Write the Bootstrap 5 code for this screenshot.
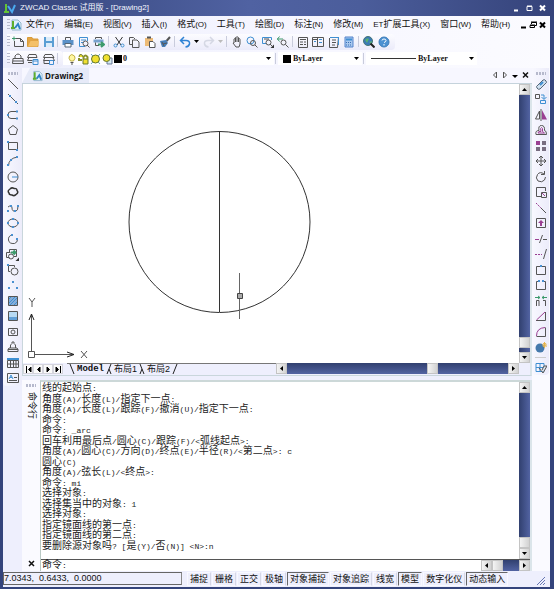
<!DOCTYPE html>
<html lang="zh-CN">
<head>
<meta charset="utf-8">
<meta name="viewport" content="width=device-width, initial-scale=1">
<title>ZWCAD Classic 试用版 - [Drawing2]</title>
<link href="https://cdn.jsdelivr.net/npm/bootstrap@5.3.0/dist/css/bootstrap.min.css" rel="stylesheet">
<style>
body{font-family:"Liberation Sans","Noto Sans CJK SC",sans-serif;font-size:9px;line-height:12px;color:#111;background:#34447c}
button,input,select{font:inherit;color:inherit;border:0;border-radius:0;background:none;padding:0;margin:0;outline-offset:-1px}
a{color:inherit;text-decoration:none}
svg{display:block;flex:none;fill:none;stroke:#555;stroke-width:1}
.bl{stroke:#3f8fd2}.pu{stroke:#9a3f92}.gn{stroke:#3c9a6c}
.fb{fill:#4a90d0;stroke:none}.fd{fill:#333;stroke:none}.fp{fill:#9a3f92;stroke:none}.fy{fill:#f0e030;stroke:#66762c}
.shell{padding:0 4px 2px 3px}
.titlebar{height:16px;background:linear-gradient(90deg,#34447a,#5062a2 45%,#4b5d9b 65%,#35437a);color:#f4f6ff;font-size:8px;margin:0 -4px 0 -3px;padding:0 7px 0 4px}
.titlebar svg{stroke:#fff}
.work{background:#eeeffd}
.bars{background:linear-gradient(90deg,#eceefc,#f6f6ff 50%,#fbfbff);padding-bottom:1px}
.menu-row{height:17px;padding:0 3px 0 4px;gap:10px}
.menu-row small{font-family:"Liberation Sans Narrow","Liberation Sans",sans-serif;font-size:8px}
.grip{width:3px;height:11px;flex:none;background:repeating-linear-gradient(#b6b9cc 0 1px,transparent 1px 3px)}
.tool-row{height:17px;padding-left:4px}
.strip{height:16px;background:linear-gradient(#fcfcff,#ebebfa);border-radius:0 4px 4px 0;padding-right:3px}
.strip button{width:15px;height:15px}
.strip button:nth-of-type(even){width:16px}
.strip button.drop{width:9px}
.tool-row button,.side button{display:flex;align-items:center;justify-content:center}
.divide{width:1px;height:11px;background:#c9ccdc;margin:0 2px 0 1px}
.combo{height:13px;background:#fff;padding:0 3px;gap:1px}
.combo select{appearance:none;min-width:0;font-family:"Liberation Serif",serif;font-size:8px;font-weight:700;line-height:11px}
.combo-layer{flex:0 1 211px;padding-left:4px}
.combo-colour{flex:0 1 84px;padding-left:5px;gap:2px}
.combo-line{flex:0 1 111px;padding-left:5px;gap:2px}
.swatch{width:8px;height:8px;background:#000;flex:none}
.sample{width:45px;height:1px;background:#333;flex:none}
.side{width:19px;background:linear-gradient(90deg,#f8f8ff,#ececfa);padding-top:4px;align-self:flex-start;border-radius:0 0 4px 4px}
.side button{width:18px;height:15px}
.side button:nth-of-type(even){height:16px}
.side-grip{width:10px;height:3px;background:repeating-linear-gradient(90deg,#b6b9cc 0 2px,transparent 2px 3px);margin-bottom:1px}
.side .rule{width:11px;height:1px;background:#ccc;margin:2px 0}
.right-dock{background:#fafaff;width:18px}
.right-dock .side{width:17px}
.tabs{height:16px;padding-right:3px;background:#f7f7ff;border-bottom:1px solid #c5d3dc}
.doc-tab{height:15px;background:#e6eaf8;clip-path:polygon(8px 0,100% 0,100% 100%,0 100%);padding:0 6px 0 10px;font-weight:700;font-size:8px;gap:2px;font-family:"Open Sans","Liberation Sans",sans-serif}
.view{border-left:1px solid #c9d6dc;border-right:2px solid #dbe5ea;min-height:0}
.drawing{background:#fff;min-width:0}
.drawing svg{stroke:#333}
.scroll-v{width:11px;background:linear-gradient(90deg,#31406f,#5263a2);flex:none}
.scroll-h{height:11px;background:linear-gradient(#31406f,#5263a2)}
.knob{width:11px;height:11px;flex:none;background:linear-gradient(90deg,#f4f4f4,#d2d2d2);border:1px solid #c4c4c4;display:flex;align-items:center;justify-content:center}
.low{margin-top:4px}
.knob svg,.caret{fill:#000;stroke:none}
.sheets{height:13px;border-left:1px solid #c9d6dc;border-right:2px solid #dbe5ea;border-bottom:1px solid #c9d6dc}
.sheets .nav-btn{width:10px;height:10px;background:#fafafa;border:1px solid #d4d4dc;display:flex;align-items:center;justify-content:center}
.sheets .nav-btn svg{fill:#000;stroke:#000}
.sheet-names{border-top:1px solid #777;height:12px;line-height:11px;gap:2px;padding-left:2px}
.sheet-names .current{font-family:"Liberation Mono",monospace;font-weight:700}
.sheet-names svg{stroke:#222}
.sheet-scroll{flex:0 0 48%;margin-right:11px}
.command{height:191px;margin-top:4px;border-right:2px solid #dbe5ea}
.command-side{width:18px;background:#fafaff;padding:4px 0 4px 0}
.command-title{writing-mode:vertical-rl;text-orientation:sideways;line-height:11px;margin-top:4px}
.command-main{background:#fff;border-left:1px solid #b9c9c4;border-top:2px solid #ccd8d8;min-width:0}
.log{font-family:"Liberation Mono","Noto Sans CJK SC",monospace;font-size:10px;line-height:10px;color:#222;padding:2px 0 7px 1px;white-space:nowrap;overflow:hidden}
.log i,.prompt i{font-style:normal;font-size:8px}
.prompt{height:12px;border-top:1px solid #555;font-family:"Liberation Mono","Noto Sans CJK SC",monospace;font-size:10px;line-height:11px;padding-left:1px}
.status{height:16px;padding-top:1px;background:#eeeffd;gap:1px}
.coords{flex:0 1 179px;height:13px;border:1px solid #666;border-right-color:#888;white-space:pre;line-height:11px}
.status button{height:14px;padding:0 2px;line-height:12px;border:1px solid #f9f9ff;border-right-color:#d5d7e6;white-space:nowrap}
.status button.on{border-color:#666 #f8f8ff #f8f8ff #666}
</style>
</head>
<body>
<div class="shell d-flex flex-column vh-100">
 <header class="titlebar d-flex align-items-center gap-1">
  <svg width="12" height="13" viewBox="0 0 12 13"><path d="M2 2v8M0 10h5" style="stroke:#63c234;stroke-width:2"/><path d="M4 4l4 6 3-7" style="stroke:#4ba9ef;stroke-width:2"/></svg>
  <span class="flex-grow-1">ZWCAD Classic 试用版 - [Drawing2]</span>
  <button aria-label="最小化"><svg width="9" height="8" viewBox="0 0 9 8"><path d="M2 6.500h4" stroke-width="2"/></svg></button>
  <button aria-label="最大化"><svg width="9" height="8" viewBox="0 0 9 8"><path d="M2 2.500h5v4H2zM2 2h5"/></svg></button>
  <button aria-label="关闭"><svg width="9" height="8" viewBox="0 0 9 8"><path d="M2 1.500l5 5M7 1.500l-5 5" stroke-width="2"/></svg></button>
 </header>

 <div class="bars">
  <nav class="menu-row d-flex align-items-center text-nowrap">
   <div class="d-flex align-items-center">
    <span class="grip"></span>
    <svg class="me-1" width="12" height="12" viewBox="0 0 12 12"><path d="M2 1h6l3 3v7H2z" style="fill:#dff0fa;stroke:#93b6cc"/><path d="M3 2v7M1 9h4" style="stroke:#5dae2c;stroke-width:2"/><path d="M5 9l3-4 2 5" style="stroke:#2f83c5;stroke-width:2"/></svg>
    <a href="#">文件<small>(F)</small></a>
   </div>
   <a href="#">编辑<small>(E)</small></a>
   <a href="#">视图<small>(V)</small></a>
   <a href="#">插入<small>(I)</small></a>
   <a href="#">格式<small>(O)</small></a>
   <a href="#">工具<small>(T)</small></a>
   <a href="#">绘图<small>(D)</small></a>
   <a href="#">标注<small>(N)</small></a>
   <a href="#">修改<small>(M)</small></a>
   <a href="#"><small>ET</small>扩展工具<small>(X)</small></a>
   <a href="#">窗口<small>(W)</small></a>
   <a href="#">帮助<small>(H)</small></a>
   <span class="d-flex ms-auto">
    <button aria-label="最小化文档"><svg width="9" height="8" viewBox="0 0 9 8"><path d="M1 6.500h5" style="stroke:#000;stroke-width:2"/></svg></button>
    <button aria-label="还原文档"><svg width="10" height="8" viewBox="0 0 10 8" style="stroke:#000"><path d="M2.500 3V1.500h5v3H6M1 4.500h4.500v2H1zM2 1h6M1 4h5"/></svg></button>
    <button aria-label="关闭文档"><svg width="8" height="8" viewBox="0 0 8 8"><path d="M1 1.500l5 5M6 1.500l-5 5" style="stroke:#000;stroke-width:2"/></svg></button>
   </span>
  </nav>

  <div class="tool-row d-flex align-items-center">
   <div class="strip d-flex align-items-center">
    <span class="grip"></span>
    <button aria-label="新建"><svg width="12" height="12" viewBox="0 0 12 12"><path d="M4 2.500h4.500l3 3v5h-9V5M8.500 2.500v3h3"/><path class="gn" d="M0 2.500h4M2 .5v4"/></svg></button>
    <button aria-label="打开"><svg width="12" height="12" viewBox="0 0 12 12"><path d="M.5 1.500H5l1 1.500h5v7.500H.5z" style="fill:#e3a545;stroke:#d99b38"/><path d="M1 10.500L3.500 5H12l-1.500 5.500z" style="fill:#f4c069;stroke:none"/></svg></button>
    <button aria-label="保存"><svg width="12" height="12" viewBox="0 0 12 12"><path d="M1 1h10v10H1z" style="fill:#5a9ed4;stroke:none"/><path d="M3 1h6v4H3zM3 7h6v4H3z" style="fill:#dcecf9;stroke:none"/></svg></button>
    <span class="divide"></span>
    <button aria-label="打印"><svg width="12" height="12" viewBox="0 0 12 12"><path d="M3.500 4V1.500h5V4"/><path d="M.5 4h11v5H.5z" style="fill:#5b91c8;stroke:none"/><path d="M3 7.500h6v3.500H3z" style="fill:#fff;stroke:#567"/></svg></button>
    <button aria-label="打印预览"><svg width="12" height="12" viewBox="0 0 12 12"><path class="bl" d="M7 10.500H1.500v-9h8V5M3 4h3M3 6.500h2M7 3v2"/><circle cx="7.500" cy="7.500" r="2.500"/><path d="M9 9l2.500 2.500"/></svg></button>
    <button aria-label="发布"><svg width="12" height="12" viewBox="0 0 12 12"><path d="M2.500 3V1.500h6V3"/><path d="M.5 3.500h10v3H.5z" style="fill:#78a2ce;stroke:none"/><path d="M2.500 6.500v3H6"/><path class="gn" d="M5 8.500h5M8 6l3 2.500L8 11" stroke-width="2"/></svg></button>
    <span class="divide"></span>
    <button aria-label="剪切"><svg width="12" height="12" viewBox="0 0 12 12"><path d="M2.500 1l5.500 8M9.500 1L4 9" style="stroke:#333"/><circle class="bl" cx="2.500" cy="9.500" r="1.500"/><circle class="bl" cx="9.500" cy="9.500" r="1.500"/></svg></button>
    <button aria-label="复制"><svg width="12" height="12" viewBox="0 0 12 12"><path d="M4 8.500H1.500v-7h4L7 3M4.500 4H9l2 2v5.500H4.500z"/></svg></button>
    <button aria-label="粘贴"><svg width="12" height="12" viewBox="0 0 12 12"><path d="M1 2h8v8H1z" style="fill:#edbb77;stroke:none"/><path d="M3 1.500h4" stroke-width="2"/><path d="M5.500 5.500h3.500l2 2v4H5.500z" style="fill:#fff"/></svg></button>
    <button aria-label="特性匹配"><svg width="12" height="12" viewBox="0 0 12 12"><path d="M11 1L7.500 5" stroke-width="2"/><path d="M1 5l6-1 2 3-3 4H3z" style="fill:#477fb9;stroke:none"/><path d="M4 8l4-1M3 6l2 4"/></svg></button>
    <span class="divide"></span>
    <button aria-label="撤消"><svg width="12" height="12" viewBox="0 0 12 12"><path d="M5 1L1.500 4.500 5 8M2 4.500h5q4 0 3.500 3.500-.5 2.500-4 3" style="stroke:#2f82d4;stroke-width:1.500"/></svg></button>
    <button class="drop" aria-label="撤消列表"><svg class="caret" width="5" height="4" viewBox="0 0 5 4"><path d="M0 0h5L2.500 3z"/></svg></button>
    <button aria-label="重做"><svg width="12" height="12" viewBox="0 0 12 12"><path d="M7 1l3.500 3.500L7 8M10 4.500H5Q1 4.500 1.500 8q.5 2.500 4 3" style="stroke:#d5d8e4;stroke-width:1.500"/></svg></button>
    <button class="drop" aria-label="重做列表"><svg class="caret" width="5" height="4" viewBox="0 0 5 4"><path d="M0 0h5L2.500 3z" style="fill:#bbb"/></svg></button>
    <span class="divide"></span>
    <button aria-label="平移"><svg width="12" height="12" viewBox="0 0 12 12"><path d="M3 7V3q1-1 1.500 0V1.500q1-1 1.500 0V1q1-.5 1.500.5V3Q9 2 9 3.500V8l-1 3H5L2 7zM4.500 3v3M6 2v4M7.500 3v3"/></svg></button>
    <button aria-label="实时缩放"><svg width="12" height="12" viewBox="0 0 12 12"><circle class="bl" cx="4.500" cy="4.500" r="3.500"/><circle cx="7" cy="7" r="2.500"/><path d="M9 9l2.500 2.500"/></svg></button>
    <button aria-label="窗口缩放"><svg width="12" height="12" viewBox="0 0 12 12"><path class="bl" d="M4 7.500H.5v-6h9V4"/><path d="M2 3h5"/><circle cx="6.500" cy="6.500" r="2.500"/><path d="M8 8l2 2"/><path class="fd" d="M12 8.500V12H8.500z"/></svg></button>
    <button aria-label="缩放上一个"><svg width="12" height="12" viewBox="0 0 12 12"><path class="gn" d="M0 3h6M2.500.5L.5 3l2 2.500"/><circle cx="6.500" cy="6.500" r="2.500"/><path d="M8.500 8.500L11.500 11.500"/></svg></button>
    <span class="divide"></span>
    <button aria-label="特性"><svg width="12" height="12" viewBox="0 0 12 12"><path d="M1.500 1.500h9v10h-9zM3 3.500h6M3 6h3M7 6h2M3 8.500h3M7 8.500h2"/></svg></button>
    <button aria-label="设计中心"><svg width="12" height="12" viewBox="0 0 12 12"><path d="M.5 1.500h11v9H.5zM5.500 1.500v9M.5 3.500h5"/><path class="bl" d="M7 3.500h3M7 6.500h3M2 5.500h2"/></svg></button>
    <button aria-label="工具选项板"><svg width="12" height="12" viewBox="0 0 12 12"><path d="M2.500 1.500h8l-1 10h-8V2M4 4h4M4 6.500h4M4 9h3"/><path class="bl" d="M2 1.500h9M10.500 1v8"/></svg></button>
    <button aria-label="计算器"><svg width="12" height="12" viewBox="0 0 12 12"><path d="M2 1h8v10H2z" style="fill:#a9c8ee;stroke:#5485cd"/><path class="bl" d="M3 3.500h6" stroke-width="2"/><path d="M3 6.500h6M3 9h6" style="stroke:#396eb5;stroke-dasharray:1 1"/></svg></button>
    <span class="divide"></span>
    <button aria-label="网上查找"><svg width="12" height="12" viewBox="0 0 12 12"><circle cx="5" cy="5" r="4.500" style="fill:#3a79b8;stroke:#477"/><path d="M2 4q2-3 4-1L4 7zM6 6l3-1-1 3z" style="fill:#58af72;stroke:none"/><path d="M7.500 7.500l4 4" style="stroke:#222;stroke-width:2"/></svg></button>
    <button aria-label="帮助"><svg width="12" height="12" viewBox="0 0 12 12"><circle cx="6" cy="6" r="5" style="fill:#4b91d2;stroke:#3e7db9"/><path d="M4 4.500Q4 3 6 3t2 1.500Q8 6 6 6.500M6 8v1.500" style="stroke:#fff"/></svg></button>
   </div>
  </div>

  <div class="tool-row d-flex align-items-center">
   <div class="strip d-flex align-items-center">
    <span class="grip"></span>
    <button aria-label="图层特性"><svg width="12" height="12" viewBox="0 0 12 12"><path d="M3 5V3q3-4 6 0v2M1 5.500h10l.5 5H.5zM1 8h10"/></svg></button>
    <button aria-label="图层状态"><svg width="12" height="12" viewBox="0 0 12 12"><path d="M2 1.500h7l1 3H.5zM2 4.500l-1.500 3h5M1 9.500h4"/><path class="bl" d="M6 6.500h5v5H6zM6 8h5"/></svg></button>
    <button aria-label="上一个图层"><svg width="12" height="12" viewBox="0 0 12 12"><path d="M2 1.500h7l2 3H.5zM2 4.500l-1.500 3h11L10 5M1 7.500v3h5"/><path class="bl" d="M6.500 7.500h4v4h-4z"/></svg></button>
    <span class="divide"></span>
   </div>
   <div class="combo combo-layer d-flex align-items-center">
    <svg width="10" height="12" viewBox="0 0 10 12"><path d="M3.500 8Q1 5 2.500 3q2-3 5 0 1.500 2-1 5z" style="fill:#fff7a2;stroke:#c1b043"/><path d="M3.500 9.500h3M4 11h2"/></svg>
    <svg width="11" height="12" viewBox="0 0 11 12"><path class="fy" d="M1 4q0-3 2-2.500T5 4M5 6h5v5H5z"/><path d="M1 5v2h3M5.500 6V4q2-3 4 0v2" style="stroke:#8b912a;stroke-width:2"/></svg>
    <svg width="11" height="12" viewBox="0 0 11 12"><path d="M1 1l9 10M10 1L1 11" style="stroke:#66a4c4"/><circle class="fy" cx="5.500" cy="6" r="4"/></svg>
    <svg width="11" height="12" viewBox="0 0 11 12"><path d="M5 5h5v6H5z" style="fill:#d5e8ef;stroke:#679"/><circle class="fy" cx="4.500" cy="5" r="3.500"/></svg>
    <span class="swatch"></span>
    <select class="flex-grow-1" aria-label="图层"><option>0</option></select>
    <svg class="caret" width="5" height="4" viewBox="0 0 5 4"><path d="M0 0h5L2.500 3z"/></svg>
   </div>
   <span class="divide"></span>
   <div class="combo combo-colour d-flex align-items-center">
    <span class="swatch"></span>
    <select class="flex-grow-1" aria-label="颜色"><option>ByLayer</option></select>
    <svg class="caret" width="5" height="4" viewBox="0 0 5 4"><path d="M0 0h5L2.500 3z"/></svg>
   </div>
   <span class="divide"></span>
   <div class="combo combo-line d-flex align-items-center">
    <span class="sample"></span>
    <select class="flex-grow-1" aria-label="线型"><option>ByLayer</option></select>
    <svg class="caret" width="5" height="4" viewBox="0 0 5 4"><path d="M0 0h5L2.500 3z"/></svg>
   </div>
  </div>
 </div>

 <main class="work d-flex flex-grow-1 overflow-hidden">
  <aside class="side d-flex flex-column align-items-center" aria-label="绘图">
   <span class="side-grip"></span>
   <button aria-label="直线"><svg width="12" height="12" viewBox="0 0 12 12"><path d="M1 1l10 10"/></svg></button>
   <button aria-label="构造线"><svg width="12" height="12" viewBox="0 0 12 12"><path d="M1 1l10 10"/><path class="fb" d="M2 2h2v2H2zM8 8h2v2H8z"/></svg></button>
   <button aria-label="多段线"><svg width="12" height="12" viewBox="0 0 12 12"><path d="M9 2.500H4Q1 2.500 1 6t3 3.500h5"/><path class="fb" d="M9 1.500h2v2H9zM9 8.500h2v2H9zM0 5h2v2H0z"/></svg></button>
   <button aria-label="正多边形"><svg width="12" height="12" viewBox="0 0 12 12"><path d="M6 1.500l4.500 3.500-1.500 5.500H3L1.500 5z"/></svg></button>
   <button aria-label="矩形"><svg width="12" height="12" viewBox="0 0 12 12"><path d="M1.500 2.500h9v7h-9z"/><path class="fb" d="M0 1h2v2H0zM9 9h2v2H9z"/></svg></button>
   <button aria-label="圆弧"><svg width="12" height="12" viewBox="0 0 12 12"><path d="M1.500 11Q1.500 3 11 2"/><path class="fb" d="M0 9h2v2H0zM3 4h2v2H3zM9 1h2v2H9z"/></svg></button>
   <button aria-label="圆"><svg width="12" height="12" viewBox="0 0 12 12"><circle cx="6" cy="6" r="5"/><path class="bl" d="M5 6h6"/></svg></button>
   <button aria-label="修订云线"><svg width="12" height="12" viewBox="0 0 12 12"><path d="M3 3q2-2 4-.5 3-.5 3 2 2 2-1 4-1.500 2-4 .5-3 0-3-2-2-2 1-4z" style="stroke:#333;stroke-width:1.500"/></svg></button>
   <button aria-label="样条曲线"><svg width="12" height="12" viewBox="0 0 12 12"><path d="M1 5q4-3 4 1t4 3q2 0 2-5"/><path class="fb" d="M0 8h2v2H0zM3 3h2v2H3zM7 8h2v2H7zM10 3h2v2h-2z"/></svg></button>
   <button aria-label="椭圆"><svg width="12" height="12" viewBox="0 0 12 12"><ellipse cx="6" cy="6" rx="5" ry="4"/><path class="fb" d="M0 5h2v2H0zM10 5h2v2h-2zM5 1h2v2H5zM5 9h2v2H5z"/></svg></button>
   <button aria-label="椭圆弧"><svg width="12" height="12" viewBox="0 0 12 12"><path d="M5 2Q1 3 1.500 7t6 3.500q3-1 3-4"/><path class="fb" d="M4 1h2v2H4zM9 5h2v2H9z"/></svg></button>
   <button aria-label="插入块"><svg width="13" height="13" viewBox="0 0 13 13"><path d="M3.500 5V1.500h7v7H8M.5 4.500h4M.5 4.500v5h3"/><circle cx="5" cy="8.500" r="2.500"/><path class="gn" d="M5 4.500h4M7.500 2.500l2 2-2 2" stroke-width="2"/><path class="fd" d="M13 9.500V13H9.500z"/></svg></button>
   <button aria-label="创建块"><svg width="12" height="12" viewBox="0 0 12 12"><path d="M3 7.500H1.500v-6h6V3"/><circle cx="7.500" cy="7.500" r="3.500"/><path class="fb" d="M0 0h2v2H0z"/></svg></button>
   <button aria-label="点"><svg width="12" height="12" viewBox="0 0 12 12"><path class="fb" d="M5 2h2v2H5zM1 8h2v2H1zM9 8h2v2H9z"/></svg></button>
   <button aria-label="图案填充"><svg width="12" height="12" viewBox="0 0 12 12"><path d="M1.500 1.500h9v9h-9z" style="fill:#86add9"/><path class="bl" d="M2 4l2-2M2 8l6-6M3 10l7-7M7 10l3-3"/></svg></button>
   <button aria-label="渐变色"><svg width="12" height="12" viewBox="0 0 12 12"><path d="M1.500 1.500h9v9h-9z" style="fill:#b7daf4"/><path d="M2 7h8v3H2z" style="fill:#62a0d8;stroke:none"/></svg></button>
   <button aria-label="面域"><svg width="12" height="12" viewBox="0 0 12 12"><path d="M1.500 2.500h9v7h-9z"/><circle cx="6" cy="6" r="2"/></svg></button>
   <button aria-label="区域覆盖"><svg width="12" height="12" viewBox="0 0 12 12"><path d="M3.500 7V4L5 2.500V1h2v1.500L8.500 4v3M3.500 7H2L1 8.500v2h10v-2L10 7zM1 8.500h10"/></svg></button>
   <button aria-label="表格"><svg width="12" height="12" viewBox="0 0 12 12"><path d="M.5 3.500h11v7H.5zM.5 7h11M3.500 3v8M6.500 3v8M9 3v8"/><path class="bl" d="M0 2h12" stroke-width="2"/></svg></button>
   <button aria-label="多行文字"><svg width="12" height="12" viewBox="0 0 12 12"><path d="M.5 1.500h11v9H.5zM7 5.500h3M2 8.500h8"/><path class="bl" d="M2 7l2-4 2 4M3 5.500h2"/></svg></button>
  </aside>

  <section class="flex-grow-1 d-flex flex-column overflow-hidden">
   <div class="tabs d-flex align-items-end">
    <a href="#" class="doc-tab d-flex align-items-center"><svg width="11" height="12" viewBox="0 0 12 12"><path d="M2 1h6l3 3v7H2z" style="fill:#dff0fa;stroke:#93b6cc"/><path d="M3 2v7M1 9h4" style="stroke:#5dae2c;stroke-width:2"/><path d="M5 9l3-4 2 5" style="stroke:#2f83c5;stroke-width:2"/></svg>Drawing2</a>
    <span class="d-flex ms-auto gap-1 pb-1">
     <button aria-label="上一个"><svg width="6" height="8" viewBox="0 0 6 8"><path d="M4.500 1v6l-3-3z"/></svg></button>
     <button aria-label="下一个"><svg width="6" height="8" viewBox="0 0 6 8"><path d="M1.500 1v6l3-3z"/></svg></button>
     <button aria-label="文档列表"><svg class="caret" width="6" height="8" viewBox="0 0 6 8"><path d="M0 4h6L3 7z"/></svg></button>
     <button aria-label="关闭标签"><svg width="7" height="8" viewBox="0 0 7 8"><path d="M1 1.500l5 5M6 1.500l-5 5" style="stroke:#111;stroke-width:1.500"/></svg></button>
    </span>
   </div>

   <div class="view d-flex flex-grow-1">
    <div class="drawing flex-grow-1 overflow-hidden">
     <svg width="100%" height="100%" role="img" aria-label="图形">
      <circle cx="196.500" cy="138" r="90.500"/>
      <path d="M196.500 47v181"/>
      <path d="M216.500 189v46" style="stroke:#666"/>
      <path d="M214.500 209.500h5v5h-5z" style="fill:#aaa;stroke:#444"/>
      <path d="M5.500 267.500h6v6h-6zM8.500 267v-37M12 270.500h39" style="stroke:#555"/>
      <path d="M6 236l2.500-6 2.500 6M44 268l7 2.500-7 2.500" style="stroke:#222"/>
      <path d="M6 214l3 4 3-4M9 218v5M58 267l6 7M64 267l-6 7" style="stroke:#555"/>
     </svg>
    </div>
    <div class="scroll-v d-flex flex-column">
     <button class="knob" aria-label="向上滚动"><svg width="5" height="3" viewBox="0 0 5 3"><path d="M0 3h5L2.500 0z"/></svg></button>
     <span class="knob mt-auto"></span>
     <button class="knob low" aria-label="向下滚动"><svg width="5" height="3" viewBox="0 0 5 3"><path d="M0 0h5L2.500 3z"/></svg></button>
    </div>
   </div>

   <div class="sheets d-flex">
    <div class="d-flex align-items-center">
     <button class="nav-btn" aria-label="第一个"><svg width="7" height="7" viewBox="0 0 7 7"><path d="M1.500 0v7M6 1v5L3.500 3.500z"/></svg></button>
     <button class="nav-btn" aria-label="前一个"><svg width="7" height="7" viewBox="0 0 7 7"><path d="M5 1v5L2.500 3.500z"/></svg></button>
     <button class="nav-btn" aria-label="后一个"><svg width="7" height="7" viewBox="0 0 7 7"><path d="M2 1v5l2.500-2.500z"/></svg></button>
     <button class="nav-btn" aria-label="最后一个"><svg width="7" height="7" viewBox="0 0 7 7"><path d="M5.500 0v7M1 1v5l2.500-2.500z"/></svg></button>
    </div>
    <div class="sheet-names flex-grow-1 d-flex text-nowrap ms-1">
     <svg width="6" height="11" viewBox="0 0 6 11"><path d="M1 0l4 10"/></svg>
     <a href="#" class="current">Model</a>
     <svg width="6" height="11" viewBox="0 0 6 11"><path d="M5 0L1 10M3 5l2 5"/></svg>
     <a href="#">布局1</a>
     <svg width="6" height="11" viewBox="0 0 6 11"><path d="M1 0l4 10M3 5l-2 5"/></svg>
     <a href="#">布局2</a>
     <svg width="6" height="11" viewBox="0 0 6 11"><path d="M5 0L1 10"/></svg>
    </div>
    <div class="sheet-scroll scroll-h d-flex">
     <button class="knob" aria-label="向左滚动"><svg width="3" height="5" viewBox="0 0 3 5"><path d="M3 0v5L0 2.500z"/></svg></button>
     <span class="flex-grow-1"></span><span class="flex-grow-1"></span>
     <span class="knob"></span>
     <span class="flex-grow-1"></span>
     <button class="knob" aria-label="向右滚动"><svg width="3" height="5" viewBox="0 0 3 5"><path d="M0 0v5l3-2.500z"/></svg></button>
    </div>
   </div>

   <section class="command d-flex" aria-label="命令行">
    <div class="command-side d-flex flex-column align-items-center">
     <span class="side-grip"></span>
     <span class="command-title">命令行</span>
     <button class="mt-auto" aria-label="关闭命令行"><svg width="7" height="7" viewBox="0 0 7 7"><path d="M1 1l5 5M6 1L1 6" style="stroke:#111;stroke-width:1.500"/></svg></button>
    </div>
    <div class="command-main flex-grow-1 d-flex flex-column">
     <div class="d-flex flex-grow-1 overflow-hidden">
      <div class="log flex-grow-1 d-flex flex-column justify-content-between">
       <div>线的起始点<i>:</i></div>
       <div>角度<i>(A)/</i>长度<i>(L)/</i>指定下一点<i>:</i></div>
       <div>角度<i>(A)/</i>长度<i>(L)/</i>跟踪<i>(F)/</i>撤消<i>(U)/</i>指定下一点<i>:</i></div>
       <div>命令<i>:</i></div>
       <div>命令<i>: _arc</i></div>
       <div>回车利用最后点<i>/</i>圆心<i>(C)/</i>跟踪<i>(F)/&lt;</i>弧线起点<i>&gt;:</i></div>
       <div>角度<i>(A)/</i>圆心<i>(C)/</i>方向<i>(D)/</i>终点<i>(E)/</i>半径<i>(R)/&lt;</i>第二点<i>&gt;: c</i></div>
       <div>圆心<i>(C)</i></div>
       <div>角度<i>(A)/</i>弦长<i>(L)/&lt;</i>终点<i>&gt;:</i></div>
       <div>命令<i>: mi</i></div>
       <div>选择对象<i>:</i></div>
       <div>选择集当中的对象<i>: 1</i></div>
       <div>选择对象<i>:</i></div>
       <div>指定镜面线的第一点<i>:</i></div>
       <div>指定镜面线的第二点<i>:</i></div>
       <div>要删除源对象吗<i>? [</i>是<i>(Y)/</i>否<i>(N)] &lt;N&gt;:n</i></div>
      </div>
      <div class="scroll-v d-flex flex-column">
       <button class="knob" aria-label="向上滚动"><svg width="5" height="3" viewBox="0 0 5 3"><path d="M0 3h5L2.500 0z"/></svg></button>
       <span class="knob mt-auto"></span>
       <button class="knob" aria-label="向下滚动"><svg width="5" height="3" viewBox="0 0 5 3"><path d="M0 0h5L2.500 3z"/></svg></button>
      </div>
     </div>
     <div class="prompt d-flex">
      <label for="cmd">命令<i>:</i></label>
      <input id="cmd" class="flex-grow-1" type="text">
      <div class="scroll-h d-flex">
       <button class="knob" aria-label="向左滚动"><svg width="3" height="5" viewBox="0 0 3 5"><path d="M3 0v5L0 2.500z"/></svg></button>
       <span class="knob me-3"></span>
       <button class="knob" aria-label="向右滚动"><svg width="3" height="5" viewBox="0 0 3 5"><path d="M0 0v5l3-2.500z"/></svg></button>
      </div>
     </div>
    </div>
   </section>
  </section>

  <div class="right-dock flex-shrink-0">
   <aside class="side d-flex flex-column align-items-center" aria-label="修改">
    <span class="side-grip"></span>
    <button aria-label="删除"><svg width="12" height="12" viewBox="0 0 12 12"><path d="M2 8l6-6q2-1 3 1t0 2l-6 6q-2 1-3-1t0-2z" style="fill:#cfe0f0;stroke:#567"/><path class="bl" d="M5 7l3-3" stroke-width="2"/></svg></button>
    <button aria-label="复制对象"><svg width="12" height="12" viewBox="0 0 12 12"><path d="M.5 1.500h4v4h-4z"/><path class="bl" d="M6 2h3v4M6.500 4L9 6.500 11.500 4M5.500 7.500h5v3h-5z"/></svg></button>
    <button aria-label="镜像"><svg width="12" height="12" viewBox="0 0 12 12"><path d="M4.500 2v8H.5zM6 0v12"/><path class="fp" d="M7 1v9.500h5z"/></svg></button>
    <button aria-label="偏移"><svg width="12" height="12" viewBox="0 0 12 12"><path d="M1 10.500q-1-4 3-4-1-5 2.500-5t3 5q2 0 2 4z"/><path class="pu" d="M3 9q0-2 3-1.500-1-4 .5-4t1 4l2 1.500z"/></svg></button>
    <button aria-label="阵列"><svg width="12" height="12" viewBox="0 0 12 12"><path class="fp" d="M1 1h4v4H1z"/><path d="M7 1h4v4H7zM1 7h4v4H1zM7 7h4v4H7z" style="fill:#776d80;stroke:none"/></svg></button>
    <button aria-label="移动"><svg width="12" height="12" viewBox="0 0 12 12"><path d="M6 1v10M1 6h10M4 3l2-2 2 2M4 9l2 2 2-2M3 4L1 6l2 2M9 4l2 2-2 2"/></svg></button>
    <button aria-label="旋转"><svg width="12" height="12" viewBox="0 0 12 12"><path d="M9 3Q5 0 2.500 3.500T3 10q4 2 6.500-1l1-3M6 3.500h3.500V0"/></svg></button>
    <button aria-label="缩放"><svg width="12" height="12" viewBox="0 0 12 12"><path d="M10.500 5V1.500h-9v9H6M6.500 6.500h5v5h-5z"/><path class="pu" d="M7 7l3 3"/></svg></button>
    <button aria-label="拉伸"><svg width="12" height="12" viewBox="0 0 12 12"><path class="pu" d="M1 1l6 6" stroke-dasharray="2 1"/><path d="M6 6l5 5"/></svg></button>
    <button aria-label="拉长"><svg width="12" height="12" viewBox="0 0 12 12"><path d="M4 1.500H1.500v9h9v-9H8M3 1.500h6"/><path class="fp" d="M6 3l3 3H7v3H5V6H3z"/></svg></button>
    <button aria-label="修剪"><svg width="12" height="12" viewBox="0 0 12 12"><path class="pu" d="M0 6.500h4"/><path d="M7.500 2l-3 8M8 6.500h4"/></svg></button>
    <button aria-label="延伸"><svg width="12" height="12" viewBox="0 0 12 12"><path class="pu" d="M0 6.500h7" stroke-dasharray="2 1"/><path d="M11.500 1l-3 10"/></svg></button>
    <button aria-label="打断于点"><svg width="12" height="12" viewBox="0 0 12 12"><path d="M1.500 2.500h9v8h-9z"/><path class="fb" d="M5 1h2v2H5z"/></svg></button>
    <button aria-label="打断"><svg width="12" height="12" viewBox="0 0 12 12"><path d="M3 2.500H1.500v8h9v-8H9"/><path class="fb" d="M3 1h2v2H3zM7 1h2v2H7z"/></svg></button>
    <button aria-label="合并"><svg width="12" height="12" viewBox="0 0 12 12"><path d="M1.500 11V5.500H4V11M10.500 11V5.500H8"/><path class="gn" d="M0 2.500h5M3 1l2 1.500L3 4M12 2.500H7M9 1L7 2.500 9 4"/></svg></button>
    <button aria-label="倒角"><svg width="12" height="12" viewBox="0 0 12 12"><path d="M1 10.500h9.500V2"/><path class="pu" d="M1.500 10l8.500-8"/></svg></button>
    <button aria-label="圆角"><svg width="12" height="12" viewBox="0 0 12 12"><path d="M1.500 10.500h9v-9"/><path class="pu" d="M1.500 10Q1.500 2 10 1.500"/></svg></button>
    <button aria-label="分解"><svg width="12" height="12" viewBox="0 0 12 12"><circle cx="5" cy="7" r="4.500" style="fill:#4579ac;stroke:none"/><path d="M9.500 1v6M7 4h5M8 2l3.500 4M11 2L8 6" style="stroke:#e5b44c"/></svg></button>
    <span class="rule"></span>
    <button aria-label="绘图次序"><svg width="12" height="12" viewBox="0 0 12 12"><path class="bl" d="M1 1.500h8v8H1zM1 5.500h8M5 1.500v8"/><path d="M4 6l4 5M7 8l2-4h3L8 11" style="fill:#d9e2ec"/></svg></button>
   </aside>
  </div>
 </main>

 <footer class="status d-flex align-items-start">
  <output class="coords me-1">7.0343,  0.6433,  0.0000</output>
  <button>捕捉</button>
  <button>栅格</button>
  <button>正交</button>
  <button>极轴</button>
  <button class="on">对象捕捉</button>
  <button>对象追踪</button>
  <button>线宽</button>
  <button class="on">模型</button>
  <button>数字化仪</button>
  <button class="on">动态输入</button>
  <svg class="ms-auto me-1 mt-1" width="10" height="9" viewBox="0 0 10 9"><path d="M1 9l8-8M4 9l5-5M7 9l2-2" style="stroke:#6676b2"/></svg>
 </footer>
</div>
<script src="https://cdn.jsdelivr.net/npm/bootstrap@5.3.0/dist/js/bootstrap.bundle.min.js"></script>
</body>
</html>
